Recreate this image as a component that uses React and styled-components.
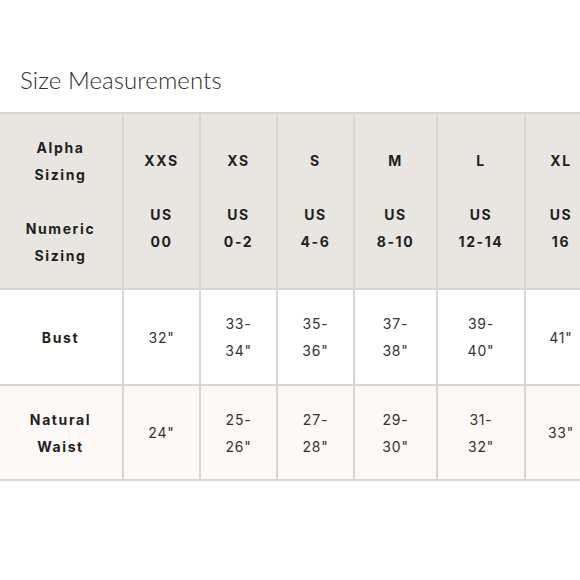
import React from "react";
import styled, { createGlobalStyle } from "styled-components";

const GlobalStyle = createGlobalStyle`
  html, body {
    margin: 0;
    padding: 0;
    background: #ffffff;
  }
  body {
    font-family: "Lato", "Open Sans", sans-serif;
    overflow: hidden;
  }
`;

const Page = styled.div`
  width: 580px;
  height: 580px;
  overflow: hidden;
  padding-top: 66px;
  box-sizing: border-box;
`;

const Title = styled.h2`
  margin: 0 0 18px 20px;
  font-family: "Lato", sans-serif;
  font-weight: 300;
  font-size: 24px;
  line-height: 28px;
  letter-spacing: 0.1px;
  color: #2e2e2e;
`;

const Table = styled.table`
  border-collapse: collapse;
  table-layout: fixed;
  width: 598px;
  margin-left: -1px;
  font-family: "Inter", "Liberation Sans", sans-serif;
`;

const Row = styled.tr`
  background: ${(props) => props.bg};
  height: ${(props) => props.h}px;
`;

const Cell = styled.td`
  border: 2px solid #d9d5d0;
  text-align: center;
  vertical-align: middle;
  padding: 0 4px;
  font-size: 14px;
  line-height: 27px;
  color: ${(props) => (props.head ? "#1f1f1f" : "#333333")};
  font-weight: ${(props) => (props.head ? 700 : 400)};
  letter-spacing: ${(props) => (props.head ? "1.6px" : "0.8px")};
  &:first-child {
    border-left: none;
  }
`;

const Para = styled.p`
  margin: 0;
  & + & {
    margin-top: 27px;
  }
`;

const widths = [124, 77, 77, 77, 83, 88, 72];

const sizes = [
  { alpha: "XXS", num: "00", bust: ["32\""], waist: ["24\""] },
  { alpha: "XS", num: "0-2", bust: ["33-", "34\""], waist: ["25-", "26\""] },
  { alpha: "S", num: "4-6", bust: ["35-", "36\""], waist: ["27-", "28\""] },
  { alpha: "M", num: "8-10", bust: ["37-", "38\""], waist: ["29-", "30\""] },
  { alpha: "L", num: "12-14", bust: ["39-", "40\""], waist: ["31-", "32\""] },
  { alpha: "XL", num: "16", bust: ["41\""], waist: ["33\""] },
];

const Lines = ({ lines }) =>
  lines.map((line, i) => (
    <React.Fragment key={i}>
      {i > 0 && <br />}
      {line}
    </React.Fragment>
  ));

const App = () => (
  <>
    <GlobalStyle />
    <Page>
      <Title>Size Measurements</Title>
      <Table>
        <colgroup>
          {widths.map((w, i) => (
            <col key={i} style={{ width: w }} />
          ))}
        </colgroup>
        <tbody>
          <Row bg="#e9e5e0" h={176}>
            <Cell head>
              <Para>
                Alpha
                <br />
                Sizing
              </Para>
              <Para>
                Numeric
                <br />
                Sizing
              </Para>
            </Cell>
            {sizes.map((s) => (
              <Cell head key={s.alpha}>
                <Para>{s.alpha}</Para>
                <Para>
                  US
                  <br />
                  {s.num}
                </Para>
              </Cell>
            ))}
          </Row>
          <Row bg="#ffffff" h={96}>
            <Cell head>Bust</Cell>
            {sizes.map((s) => (
              <Cell key={s.alpha}>
                <Lines lines={s.bust} />
              </Cell>
            ))}
          </Row>
          <Row bg="#fcf9f7" h={95}>
            <Cell head>
              Natural
              <br />
              Waist
            </Cell>
            {sizes.map((s) => (
              <Cell key={s.alpha}>
                <Lines lines={s.waist} />
              </Cell>
            ))}
          </Row>
        </tbody>
      </Table>
    </Page>
  </>
);

export default App;
